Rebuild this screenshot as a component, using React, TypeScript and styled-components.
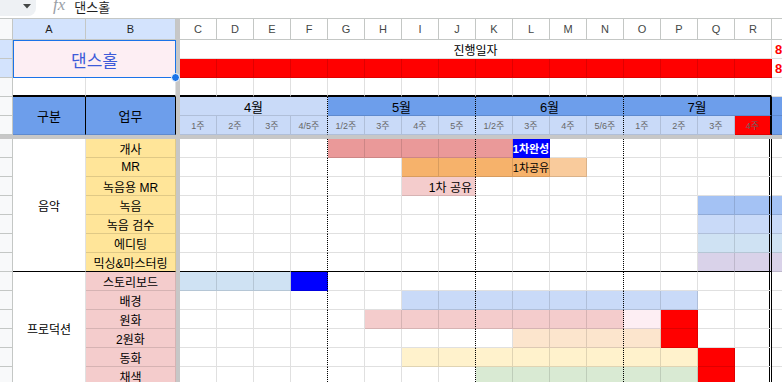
import React from "react";
import styled, { createGlobalStyle } from "styled-components";

const GRID = "rgba(0, 0, 0, 0.12)";
const HEAD_LINE = "#c4c7c5";
const MONTH_BLUE = "#6d9eeb";
const WEEK_BLUE = "#c9daf8";

const GlobalStyle = createGlobalStyle`
  html, body {
    margin: 0;
    padding: 0;
    background: #fff;
    overflow: hidden;
  }
  body {
    font-family: "Liberation Sans", "Noto Sans CJK KR", sans-serif;
  }
`;

type Edge = "grid" | "dotted" | "black" | "thick" | "double";

const lineFor = (e?: Edge) => {
  switch (e) {
    case "dotted":
      return "1px dotted #000";
    case "black":
      return "1px solid #000";
    case "thick":
      return "2px solid #000";
    case "double":
      return "3px double #000";
    default:
      return `1px solid ${GRID}`;
  }
};

type Seg = {
  from: number;
  to: number;
  color: string;
  text?: string;
  ink?: string;
  bold?: boolean;
  size?: number;
  merge?: boolean;
  align?: "left" | "center" | "right";
};

type Task = { name: string; segs: Seg[]; tail?: string };

const COLS = "CDEFGHIJKLMNOPQR".split("");
const WEEKS = ["1주", "2주", "3주", "4/5주", "1/2주", "3주", "4주", "5주", "1/2주", "3주", "4주", "5/6주", "1주", "2주", "3주", "4주"];
const MONTHS = [
  { label: "4월", bg: WEEK_BLUE },
  { label: "5월", bg: MONTH_BLUE },
  { label: "6월", bg: MONTH_BLUE },
  { label: "7월", bg: MONTH_BLUE },
];

const MUSIC: Task[] = [
  {
    name: "개사",
    segs: [
      { from: 4, to: 8, color: "#ea9999" },
      { from: 9, to: 9, color: "#0000ff", text: "1차완성", ink: "#fff", bold: true, size: 11 },
    ],
  },
  {
    name: "MR",
    segs: [
      { from: 6, to: 8, color: "#f6b26b" },
      { from: 9, to: 9, color: "#f6b26b", text: "1차공유", size: 11 },
      { from: 10, to: 10, color: "#f9cb9c" },
    ],
  },
  { name: "녹음용 MR", segs: [{ from: 6, to: 7, color: "#f4cccc", text: "1차 공유", merge: true, align: "right" }] },
  { name: "녹음", segs: [{ from: 14, to: 15, color: "#a4c2f4" }], tail: "#a4c2f4" },
  { name: "녹음 검수", segs: [{ from: 14, to: 15, color: "#c9daf8" }], tail: "#c9daf8" },
  { name: "에디팅", segs: [{ from: 14, to: 15, color: "#cfe2f3" }], tail: "#cfe2f3" },
  { name: "믹싱&마스터링", segs: [{ from: 14, to: 15, color: "#d9d2e9" }], tail: "#d9d2e9" },
];

const PRODUCTION: Task[] = [
  { name: "스토리보드", segs: [{ from: 0, to: 2, color: "#cfe2f3" }, { from: 3, to: 3, color: "#0000ff" }] },
  { name: "배경", segs: [{ from: 6, to: 13, color: "#c9daf8" }] },
  {
    name: "원화",
    segs: [
      { from: 5, to: 11, color: "#f4cccc" },
      { from: 12, to: 12, color: "#fdeef3" },
      { from: 13, to: 13, color: "#ff0000" },
    ],
  },
  { name: "2원화", segs: [{ from: 9, to: 12, color: "#fce5cd" }, { from: 13, to: 13, color: "#ff0000" }] },
  { name: "동화", segs: [{ from: 6, to: 13, color: "#fff2cc" }, { from: 14, to: 14, color: "#ff0000" }] },
  { name: "채색", segs: [{ from: 8, to: 13, color: "#d9ead3" }, { from: 14, to: 14, color: "#ff0000" }] },
];

// right edge of gantt column k (0 = C)
const ganttEdge = (k: number, last: Edge): Edge => {
  if (k === 3 || k === 7 || k === 11) return "dotted";
  if (k === 15) return last;
  return "grid";
};

const App = () => {
  const musicStart = 8;
  const prodStart = musicStart + MUSIC.length;

  const renderTask = (task: Task, row: number, under: Edge, taskBg: string) => {
    const cells: React.ReactNode[] = [];
    let k = 0;
    while (k < 16) {
      const seg = task.segs.find((s) => k >= s.from && k <= s.to);
      if (seg && seg.merge) {
        cells.push(
          <Cell
            key={k}
            $row={row}
            $col={5 + k}
            $span={seg.to - seg.from + 1}
            $bg={seg.color}
            $right={ganttEdge(seg.to, "double")}
            $under={under}
            $align={seg.align}
          >
            {seg.text}
          </Cell>
        );
        k = seg.to + 1;
      } else {
        cells.push(
          <Cell
            key={k}
            $row={row}
            $col={5 + k}
            $bg={seg?.color}
            $right={ganttEdge(k, "double")}
            $under={under}
            $ink={seg?.ink}
            $bold={seg?.bold}
            $size={seg?.size}
            $tight={!!seg?.text}
          >
            {seg?.text}
          </Cell>
        );
        k++;
      }
    }
    return (
      <React.Fragment key={task.name}>
        <RowHead $row={row} />
        <Cell $row={row} $col={3} $bg={taskBg} $under={under === "black" ? "black" : undefined}>
          {task.name}
        </Cell>
        {cells}
        <Cell $row={row} $col={21} $bg={task.tail} />
      </React.Fragment>
    );
  };

  return (
    <Page>
      <GlobalStyle />
      <FormulaBar>
        <NameBox>
          <svg width="8" height="5" viewBox="0 0 8 5">
            <path d="M0 0h8L4 4.5z" fill="#444746" />
          </svg>
        </NameBox>
        <Fx>fx</Fx>
        <FormulaText>댄스홀</FormulaText>
      </FormulaBar>

      <Sheet>
        {/* column headers */}
        <RowHead $row={1} />
        <ColHead $col={2} $active>
          A
        </ColHead>
        <ColHead $col={3} $active>
          B
        </ColHead>
        {COLS.map((c, i) => (
          <ColHead key={c} $col={5 + i}>
            {c}
          </ColHead>
        ))}
        <ColHead $col={21}>S</ColHead>

        {/* rows 1-3 */}
        <RowHead $row={2} $active />
        <RowHead $row={3} $active />
        <RowHead $row={4} />
        <Title>
          댄스홀
          <Handle />
        </Title>
        <Cell $row={2} $col={5} $span={16}>
          진행일자
        </Cell>
        <Cell $row={2} $col={21} $align="left" $ink="#ff0000" $bold $size={13}>
          8
        </Cell>
        {COLS.map((c, i) => (
          <Cell key={c} $row={3} $col={5 + i} $bg="#ff0000" />
        ))}
        <Cell $row={3} $col={21} $align="left" $ink="#ff0000" $bold $size={13}>
          8
        </Cell>
        <Cell $row={4} $col={2} $under="thick" />
        <Cell $row={4} $col={3} $under="thick" />
        {COLS.map((c, i) => (
          <Cell key={c} $row={4} $col={5 + i} $under="thick" />
        ))}
        <Cell $row={4} $col={21} />

        {/* month / week header */}
        <RowHead $row={5} />
        <RowHead $row={6} />
        <Cell $row={5} $rows={2} $col={2} $bg={MONTH_BLUE} $right="black" $size={13}>
          구분
        </Cell>
        <Cell $row={5} $rows={2} $col={3} $bg={MONTH_BLUE} $right="black" $size={13}>
          업무
        </Cell>
        {MONTHS.map((m, i) => (
          <Cell
            key={m.label}
            $row={5}
            $col={5 + i * 4}
            $span={4}
            $bg={m.bg}
            $right={ganttEdge(i * 4 + 3, "thick")}
            $size={13}
          >
            {m.label}
          </Cell>
        ))}
        <Cell $row={5} $col={21} $bg={MONTH_BLUE} />
        {WEEKS.map((w, i) => (
          <Cell
            key={i}
            $row={6}
            $col={5 + i}
            $bg={i === 15 ? "#ff0000" : WEEK_BLUE}
            $right={ganttEdge(i, "thick")}
            $size={9}
            $ink="#666666"
          >
            {w}
          </Cell>
        ))}
        <Cell $row={6} $col={21} $bg={MONTH_BLUE} />

        <FrozenRow />

        {/* 음악 */}
        <Cell $row={musicStart} $rows={MUSIC.length} $col={2} $under="black">
          음악
        </Cell>
        {MUSIC.map((t, i) =>
          renderTask(t, musicStart + i, i === MUSIC.length - 1 ? "black" : "grid", "#ffe599")
        )}

        {/* 프로덕션 */}
        <Cell $row={prodStart} $rows={PRODUCTION.length} $col={2}>
          프로덕션
        </Cell>
        {PRODUCTION.map((t, i) => renderTask(t, prodStart + i, "grid", "#f4cccc"))}

        <FrozenCol />
      </Sheet>
    </Page>
  );
};

const Page = styled.div`
  width: 809px;
  font-family: "Liberation Sans", "Noto Sans CJK KR", sans-serif;
`;

const FormulaBar = styled.div`
  display: flex;
  align-items: flex-start;
  height: 18px;
  border-bottom: 1px solid ${HEAD_LINE};
  overflow: hidden;
`;

const NameBox = styled.div`
  width: 36px;
  height: 16px;
  box-sizing: border-box;
  display: flex;
  justify-content: flex-end;
  align-items: flex-start;
  padding: 4px 5px 0 0;
  background: #eef1f4;
  border-radius: 0 0 8px 0;
`;

const Fx = styled.span`
  margin: -3px 0 0 17px;
  font-family: "Liberation Serif", serif;
  font-style: italic;
  font-size: 17px;
  line-height: 16px;
  color: #9aa0a6;
`;

const FormulaText = styled.span`
  margin: -3px 0 0 9px;
  font-size: 13px;
  color: #1f1f1f;
`;

const Sheet = styled.div`
  display: grid;
  grid-template-columns: 13px 73px 90px 4px repeat(16, 37px) 37px;
  grid-template-rows: 21px repeat(5, 19px) 4px repeat(13, 19px);
`;

const FrozenCol = styled.div`
  grid-row: 1 / -1;
  grid-column: 4;
  background: #c7c7c7;
`;

const FrozenRow = styled.div`
  grid-row: 7;
  grid-column: 1 / -1;
  background: #c7c7c7;
`;

const ColHead = styled.div<{ $col: number; $active?: boolean }>`
  grid-row: 1;
  grid-column: ${(p) => p.$col};
  box-sizing: border-box;
  display: flex;
  align-items: center;
  justify-content: center;
  background: ${(p) => (p.$active ? "#d3e3fd" : "#fff")};
  border-right: 1px solid ${HEAD_LINE};
  border-bottom: 1px solid ${HEAD_LINE};
  font-size: 11px;
  color: ${(p) => (p.$active ? "#1f1f1f" : "#444746")};
`;

const RowHead = styled.div<{ $row: number; $active?: boolean }>`
  grid-row: ${(p) => p.$row};
  grid-column: 1;
  box-sizing: border-box;
  background: ${(p) => (p.$active ? "#d3e3fd" : "#f8f9fa")};
  border-right: 1px solid ${HEAD_LINE};
  border-bottom: 1px solid ${HEAD_LINE};
`;

const Title = styled.div`
  grid-row: 2 / span 2;
  grid-column: 2 / span 2;
  position: relative;
  z-index: 2;
  box-sizing: border-box;
  display: flex;
  align-items: center;
  justify-content: center;
  background: #fdeef3;
  border: 1px solid #1a73e8;
  font-size: 17px;
  color: #3d5bd9;
`;

const Handle = styled.span`
  position: absolute;
  right: -5px;
  bottom: -5px;
  width: 7px;
  height: 7px;
  border-radius: 50%;
  background: #1a73e8;
  border: 1px solid #fff;
`;

interface CellProps {
  $row: number;
  $col: number;
  $span?: number;
  $rows?: number;
  $bg?: string;
  $right?: Edge;
  $under?: Edge;
  $align?: "left" | "center" | "right";
  $size?: number;
  $ink?: string;
  $bold?: boolean;
  $tight?: boolean;
}

const Cell = styled.div<CellProps>`
  grid-row: ${(p) => p.$row} / span ${(p) => p.$rows ?? 1};
  grid-column: ${(p) => p.$col} / span ${(p) => p.$span ?? 1};
  box-sizing: border-box;
  min-width: 0;
  display: flex;
  align-items: center;
  justify-content: ${(p) =>
    p.$align === "right" ? "flex-end" : p.$align === "left" ? "flex-start" : "center"};
  padding: ${(p) => (p.$tight ? "0" : "0 3px")};
  overflow: hidden;
  white-space: nowrap;
  background: ${(p) => p.$bg ?? "#fff"};
  border-right: ${(p) => lineFor(p.$right)};
  border-bottom: ${(p) => lineFor(p.$under)};
  font-size: ${(p) => p.$size ?? 12}px;
  font-weight: ${(p) => (p.$bold ? 700 : 400)};
  color: ${(p) => p.$ink ?? "#000"};
`;

export default App;
